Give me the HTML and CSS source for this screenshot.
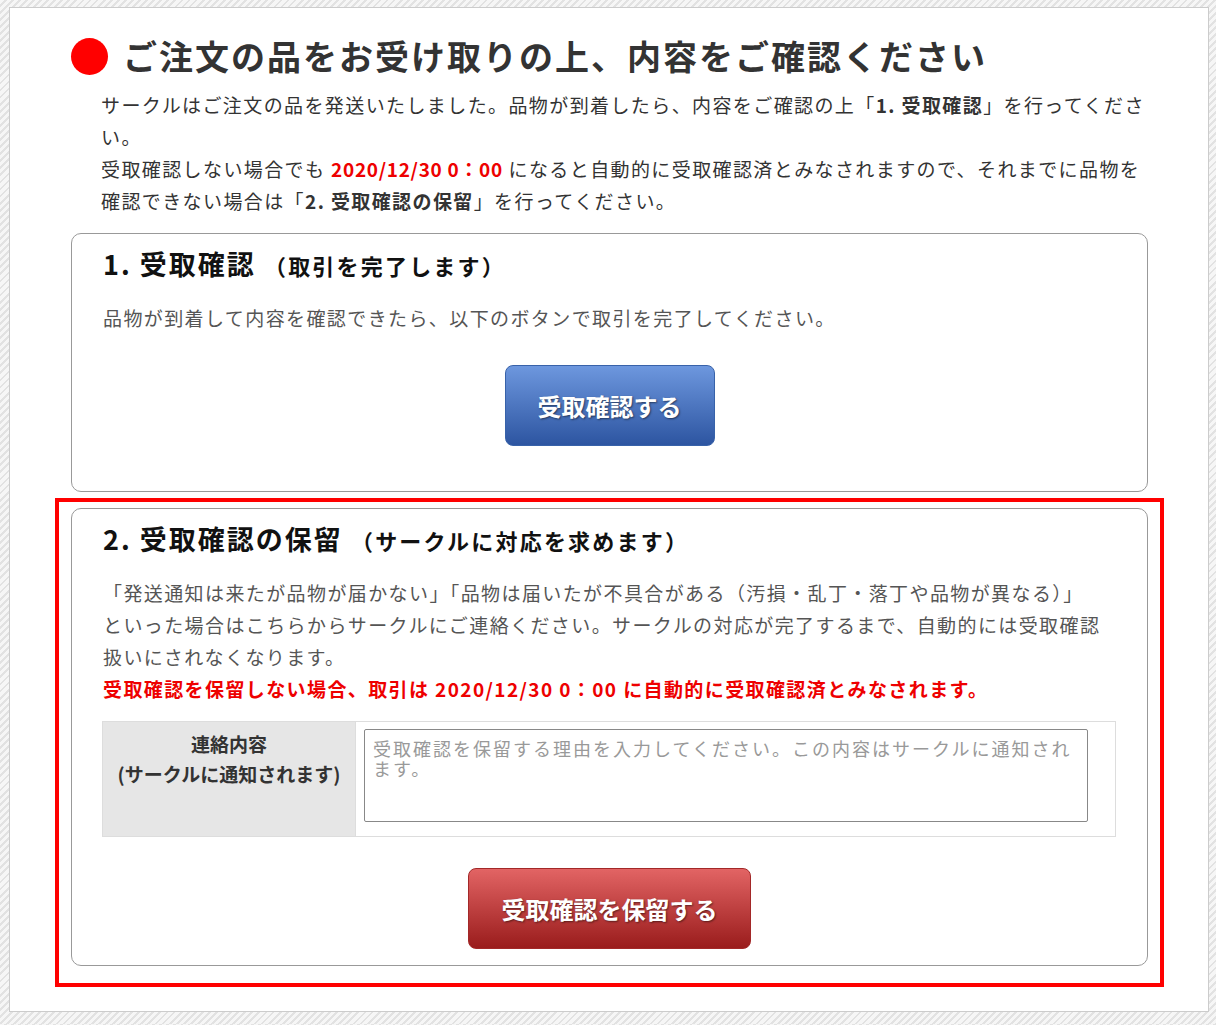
FILE: index.html
```html
<!DOCTYPE html>
<html lang="ja">
<head>
    <meta charset="UTF-8">
    <meta name="viewport" content="width=device-width, initial-scale=1.0">
    <title>受取確認</title>
    <link rel="stylesheet" href="styles.css">
</head>
<body>
    <div class="page">
        <h1 class="page-title"><span class="dot"></span>ご注文の品をお受け取りの上、内容をご確認ください</h1>
        <p class="lead">
            サークルはご注文の品を発送いたしました。品物が到着したら、内容をご確認の上「<b>1. 受取確認</b>」を行ってください。<br>
            受取確認しない場合でも <b class="red">2020/12/30 0：00</b> になると自動的に受取確認済とみなされますので、それまでに品物を確認できない場合は「<b>2. 受取確認の保留</b>」を行ってください。
        </p>

        <div class="box">
            <h2 class="box-title">1. 受取確認 <small>（取引を完了します）</small></h2>
            <p class="box-text">品物が到着して内容を確認できたら、以下のボタンで取引を完了してください。</p>
            <div class="btn-row">
                <button class="btn btn-blue">受取確認する</button>
            </div>
        </div>

        <div class="highlight">
            <div class="box">
                <h2 class="box-title">2. 受取確認の保留 <small>（サークルに対応を求めます）</small></h2>
                <p class="box-text">
                    「発送通知は来たが品物が届かない」「品物は届いたが不具合がある（汚損・乱丁・落丁や品物が異なる）」<br>
                    といった場合はこちらからサークルにご連絡ください。サークルの対応が完了するまで、自動的には受取確認扱いにされなくなります。<br>
                    <strong class="red">受取確認を保留しない場合、取引は 2020/12/30 0：00 に自動的に受取確認済とみなされます。</strong>
                </p>
                <table class="form-table">
                    <tr>
                        <th>連絡内容<br>(サークルに通知されます)</th>
                        <td><textarea placeholder="受取確認を保留する理由を入力してください。この内容はサークルに通知されます。"></textarea></td>
                    </tr>
                </table>
                <div class="btn-row">
                    <button class="btn btn-red">受取確認を保留する</button>
                </div>
            </div>
        </div>
    </div>
</body>
</html>
```

FILE: styles.css
```css
/* styles.css */
body {
    margin: 0;
    font-family: "Noto Sans CJK JP", sans-serif;
    color: #333;
    background: repeating-linear-gradient(135deg, #f6f6f6 0, #f6f6f6 3px, #e2e2e2 3px, #e2e2e2 5px);
}

.page {
    background-color: #fff;
    border: 1px solid #ccc;
    margin: 7px 7px 12px 9px;
    padding: 24px 60px 24px 61px;
}

.page-title {
    display: flex;
    align-items: center;
    gap: 15px;
    margin: 0;
    font-size: 34px;
    line-height: 48px;
    letter-spacing: 2px;
    font-weight: bold;
    color: #333;
}

.dot {
    width: 37px;
    height: 37px;
    border-radius: 50%;
    background-color: #f00;
    flex-shrink: 0;
}

.lead {
    margin: 9px 0 16px 30px;
    font-size: 19px;
    line-height: 32px;
    letter-spacing: 1.4px;
}

.lead .red {
    letter-spacing: 0.7px;
}

.red {
    color: #e00;
}

.box {
    border: 1px solid #999;
    border-radius: 10px;
    padding: 10px 31px 45px;
    background-color: #fff;
}

.box-title {
    margin: 0;
    font-size: 27px;
    line-height: 40px;
    letter-spacing: 2px;
    font-weight: bold;
    color: #111;
}

.box-title small {
    font-size: 22px;
    letter-spacing: 2.2px;
}

.box-text {
    margin: 17px 0 0;
    font-size: 19px;
    line-height: 32px;
    letter-spacing: 1.4px;
    color: #555;
}

.btn-row {
    display: flex;
    justify-content: center;
    margin-top: 31px;
}

.btn {
    height: 81px;
    border-radius: 8px;
    color: #fff;
    font-family: "Noto Sans CJK JP", sans-serif;
    font-size: 24px;
    font-weight: bold;
    text-shadow: 1px 1px 2px rgba(0, 0, 0, 0.5);
    cursor: pointer;
}

.btn-blue {
    width: 210px;
    background: linear-gradient(#6d97de, #2d55a1);
    border: 1px solid #3862a9;
}

.btn-red {
    width: 283px;
    background: linear-gradient(#e26464, #9a1c1c);
    border: 1px solid #a32828;
}

.highlight {
    border: 4px solid #f00;
    margin: 6px -16px 0;
    padding: 6px 12px 17px;
}

.highlight .box {
    padding-bottom: 16px;
}

.form-table {
    width: calc(100% + 1px);
    margin: 16px 0 0 -1px;
    border-collapse: collapse;
}

.form-table th,
.form-table td {
    border: 1px solid #ddd;
    vertical-align: top;
}

.form-table th {
    width: 252px;
    padding: 7px 0 0;
    background-color: #e6e6e6;
    font-size: 19px;
    line-height: 30px;
    font-weight: bold;
    color: #333;
}

.form-table td {
    padding: 7px 8px 14px;
}

.form-table textarea {
    display: block;
    box-sizing: border-box;
    width: 724px;
    height: 93px;
    padding: 8px;
    border: 1px solid #888;
    border-radius: 2px;
    font-family: "Noto Sans CJK JP", sans-serif;
    font-size: 18px;
    line-height: 20px;
    letter-spacing: 2px;
    resize: none;
}

.form-table textarea::placeholder {
    color: #999;
}
```
